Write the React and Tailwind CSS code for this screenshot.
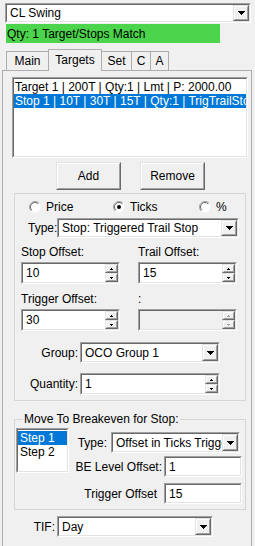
import React from 'react';

function Sunken({ className = '', inner = 'bg-white', children }) {
  return (
    <div className={'border border-t-[#a0a0a0] border-l-[#a0a0a0] border-r-white border-b-white ' + className}>
      <div className={'h-full w-full border border-t-[#696969] border-l-[#696969] border-r-[#e3e3e3] border-b-[#e3e3e3] ' + inner}>
        {children}
      </div>
    </div>
  );
}

function Raised({ className = '', children }) {
  return (
    <div className={'border border-t-[#e3e3e3] border-l-[#e3e3e3] border-r-[#696969] border-b-[#696969] ' + className}>
      <div className="h-full w-full border border-t-white border-l-white border-r-[#a0a0a0] border-b-[#a0a0a0] bg-[#f0f0f0] flex items-center justify-center">
        {children}
      </div>
    </div>
  );
}

function DownArrow() {
  return (
    <svg width="7" height="4" viewBox="0 0 7 4" shapeRendering="crispEdges">
      <path d="M0 0H7V1H6V2H5V3H4V4H3V3H2V2H1V1H0Z" fill="#000" />
    </svg>
  );
}

function SpinArrow({ up, disabled }) {
  const d = up ? 'M1 0H2V1H3V2H0V1H1Z' : 'M0 0H3V1H2V2H1V1H0Z';
  return (
    <svg width="3" height="2" viewBox="0 0 3 2" shapeRendering="crispEdges">
      <path d={d} fill={disabled ? '#a0a0a0' : '#000'} />
    </svg>
  );
}

function Combo({ className = '', value }) {
  return (
    <Sunken className={className}>
      <div className="flex h-full">
        <div className="flex-1 flex items-center pl-[3px] whitespace-nowrap overflow-hidden">{value}</div>
        <Raised className="w-[16px] h-full shrink-0">
          <DownArrow />
        </Raised>
      </div>
    </Sunken>
  );
}

function Spin({ className = '', value, disabled }) {
  return (
    <Sunken className={className} inner={disabled ? 'bg-[#f0f0f0]' : 'bg-white'}>
      <div className="flex h-full">
        <div className="flex-1 flex items-center pl-[3px]">{value}</div>
        <div className="w-[13px] h-full flex flex-col">
          <Raised className="flex-1 min-h-0">
            <SpinArrow up disabled={disabled} />
          </Raised>
          <Raised className="flex-1 min-h-0">
            <SpinArrow disabled={disabled} />
          </Raised>
        </div>
      </div>
    </Sunken>
  );
}

function TextBox({ className = '', value }) {
  return (
    <Sunken className={className}>
      <div className="h-full flex items-center pl-[3px]">{value}</div>
    </Sunken>
  );
}

function Radio({ checked }) {
  return (
    <svg width="12" height="12" viewBox="0 0 12 12" className="shrink-0">
      <circle cx="6" cy="6" r="5.5" fill="#fff" />
      <path d="M2.1 9.9A5.5 5.5 0 0 1 9.9 2.1" stroke="#a0a0a0" fill="none" />
      <path d="M2.8 9.2A4.5 4.5 0 0 1 9.2 2.8" stroke="#696969" fill="none" />
      {checked && <circle cx="6" cy="6" r="2" fill="#000" />}
    </svg>
  );
}

function Tab({ label, width, selected, last }) {
  if (selected) {
    return (
      <div className={'relative z-10 -mb-px h-[22px] border border-b-0 border-[#adadad] bg-[#f0f0f0] flex items-center justify-center pb-[2px] ' + width}>
        {label}
      </div>
    );
  }
  return (
    <div className={'h-[19px] border-t border-[#adadad] flex items-center justify-center ' + (last ? 'border-r ' : '') + width}>
      {label}
    </div>
  );
}

export default function App() {
  return (
    <div className="w-[255px] h-[546px] overflow-hidden bg-[#f0f0f0] text-[12px] leading-[14px] text-black font-['Liberation_Sans',Arial,sans-serif]">
      <Combo className="ml-[5px] mt-[3px] w-[246px] h-[20px]" value="CL Swing" />
      <div className="ml-[6px] mt-[1px] w-[214px] h-[19px] bg-[#4cd44c] flex items-center pl-[1px]">
        Qty: 1 Target/Stops Match
      </div>

      <div className="mt-[6px] ml-[6px] h-[21px] flex items-end">
        <div className="h-[19px] w-[42px] border-l border-t border-[#adadad] flex items-center justify-center">Main</div>
        <Tab label="Targets" width="w-[54px]" selected />
        <div className="h-[19px] w-[29px] border-t border-[#adadad] flex items-center justify-center">Set</div>
        <div className="h-[19px] w-[19px] border-l border-t border-[#adadad] flex items-center justify-center">C</div>
        <Tab label="A" width="w-[19px] border-l" last />
      </div>

      <div className="ml-[2px] w-[250px] h-[480px] border border-[#adadad]">
        <Sunken className="mt-[6px] ml-[9px] w-[236px] h-[81px]">
          <div className="pt-[1px] whitespace-nowrap overflow-hidden">
            <div className="h-[14px] pl-[1px]">Target 1 | 200T | Qty:1 | Lmt | P: 2000.00</div>
            <div className="h-[14px] pl-[1px] bg-[#0078d7] text-white">Stop 1 | 10T | 30T | 15T | Qty:1 | TrigTrailStop</div>
          </div>
        </Sunken>

        <div className="mt-[4px] flex">
          <Raised className="ml-[53px] w-[65px] h-[28px]">Add</Raised>
          <Raised className="ml-[19px] w-[65px] h-[28px]">Remove</Raised>
        </div>

        <div className="mt-[3px] ml-[11px] w-[232px] h-[208px] border border-[#d5d5d5]">
          <div className="mt-[6px] h-[13px] flex items-center">
            <div className="ml-[14px] w-[84px] flex items-center">
              <Radio />
              <span className="ml-[5px]">Price</span>
            </div>
            <div className="w-[86px] flex items-center">
              <Radio checked />
              <span className="ml-[5px]">Ticks</span>
            </div>
            <div className="flex items-center">
              <Radio />
              <span className="ml-[5px]">%</span>
            </div>
          </div>

          <div className="mt-[5px] flex items-center">
            <span className="ml-[13px] w-[29px]">Type:</span>
            <Combo className="w-[182px] h-[20px]" value="Stop: Triggered Trail Stop" />
          </div>

          <div className="mt-[7px] ml-[6px] flex">
            <div className="w-[117px] flex flex-col">
              <span className="h-[14px]">Stop Offset:</span>
              <Spin className="mt-[3px] w-[99px] h-[22px]" value="10" />
              <span className="mt-[8px] h-[14px]">Trigger Offset:</span>
              <Spin className="mt-[3px] w-[99px] h-[22px]" value="30" />
            </div>
            <div className="w-[99px] flex flex-col">
              <span className="h-[14px]">Trail Offset:</span>
              <Spin className="mt-[3px] w-[99px] h-[22px]" value="15" />
              <span className="mt-[8px] h-[14px]">:</span>
              <Spin className="mt-[3px] w-[99px] h-[22px]" value="" disabled />
            </div>
          </div>

          <div className="mt-[11px] flex items-center">
            <span className="w-[63px] text-right">Group:</span>
            <Combo className="ml-[2px] w-[140px] h-[21px]" value="OCO Group 1" />
          </div>
          <div className="mt-[10px] flex items-center">
            <span className="w-[63px] text-right">Quantity:</span>
            <Spin className="ml-[2px] w-[140px] h-[22px]" value="1" />
          </div>
        </div>

        <fieldset className="mt-[11px] ml-[11px] w-[232px] h-[98px] border border-[#d5d5d5]">
          <legend className="ml-[8px] px-[1px] leading-[14px]">Move To Breakeven for Stop:</legend>
          <div className="flex items-start">
            <Sunken className="mt-[2px] ml-[1px] w-[53px] h-[45px] shrink-0">
              <div className="pt-[1px]">
                <div className="h-[14px] pl-[2px] bg-[#0078d7] text-white">Step 1</div>
                <div className="h-[14px] pl-[2px]">Step 2</div>
              </div>
            </Sunken>
            <div className="flex-1 flex flex-col items-end pr-[3px]">
              <div className="mt-[6px] flex items-center">
                <span>Type:</span>
                <Combo className="ml-[4px] mr-[2px] w-[129px] h-[21px]" value="Offset in Ticks Trigger" />
              </div>
              <div className="mt-[3px] flex items-center">
                <span>BE Level Offset:</span>
                <TextBox className="ml-[2px] w-[78px] h-[21px]" value="1" />
              </div>
              <div className="mt-[6px] flex items-center">
                <span>Trigger Offset</span>
                <TextBox className="ml-[7px] w-[78px] h-[21px]" value="15" />
              </div>
            </div>
          </div>
        </fieldset>

        <div className="mt-[6px] flex items-center">
          <span className="w-[52px] text-right">TIF:</span>
          <Combo className="ml-[2px] w-[156px] h-[21px]" value="Day" />
        </div>
      </div>
    </div>
  );
}
